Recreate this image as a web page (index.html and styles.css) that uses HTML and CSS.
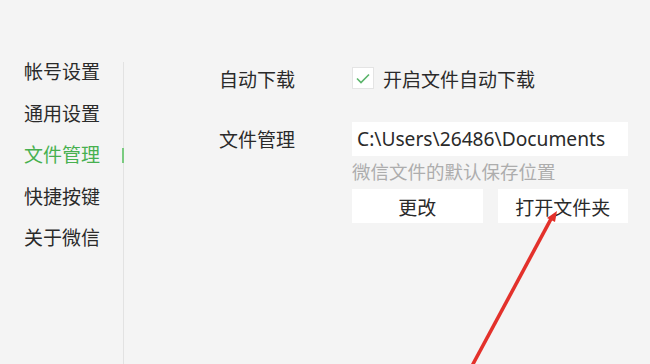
FILE: index.html
```html
<!DOCTYPE html>
<html lang="zh-CN">
<head>
<meta charset="utf-8">
<link rel="stylesheet" href="styles.css">
</head>
<body>
<div class="window">
  <nav class="sidebar">
    <ul class="menu">
      <li class="item">帐号设置</li>
      <li class="item">通用设置</li>
      <li class="item active">文件管理</li>
      <li class="item">快捷按键</li>
      <li class="item">关于微信</li>
    </ul>
  </nav>
  <main class="content">
    <div class="row row-download">
      <div class="label">自动下载</div>
      <label class="check">
        <span class="box"><svg width="14" height="11" viewBox="0 0 14 11"><path d="M1 5.5 L5 9.5 L13 1.5" fill="none" stroke="#5ab46a" stroke-width="1.6"/></svg></span>
        <span class="check-text">开启文件自动下载</span>
      </label>
    </div>
    <div class="row row-files">
      <div class="label label-files">文件管理</div>
      <div class="controls">
        <div class="path">C:\Users\26486\Documents</div>
        <div class="hint">微信文件的默认保存位置</div>
        <div class="buttons">
          <button class="btn">更改</button>
          <button class="btn">打开文件夹</button>
        </div>
      </div>
    </div>
  </main>
  <svg class="arrow" width="650" height="364" viewBox="0 0 650 364">
    <polygon points="471,364 475,364 553,219 550,217" fill="#e3312b"/>
    <polygon points="557,211 547,218 555,222" fill="#e3312b"/>
  </svg>
</div>
</body>
</html>
```
FILE: styles.css
```css
* { box-sizing: border-box; }
html, body { margin: 0; padding: 0; }
body {
  width: 650px;
  height: 364px;
  overflow: hidden;
  background: #f4f4f4;
  font-family: "Noto Sans CJK SC", "Noto Sans", sans-serif;
  color: #2a2a2a;
}
.window {
  position: relative;
  display: flex;
  height: 364px;
}
.sidebar {
  width: 124px;
  margin-top: 62px;
  border-right: 1px solid #e2e2e2;
  flex-shrink: 0;
}
.menu {
  list-style: none;
  margin: -12px 0 0 0;
  padding: 0 0 0 24px;
}
.item {
  position: relative;
  height: 41.5px;
  line-height: 41.5px;
  font-size: 19px;
}
.item.active { color: #47b04f; }
.item.active::after {
  content: "";
  position: absolute;
  right: -1px;
  top: 15px;
  width: 2px;
  height: 15px;
  background: #7acb80;
}
.content {
  flex: 1;
  padding: 67px 0 0 95px;
  font-size: 19px;
}
.row { display: flex; }
.label { width: 133px; flex-shrink: 0; }
.row-download { height: 22px; align-items: center; }
.check { display: flex; align-items: center; }
.box {
  width: 22px;
  height: 22px;
  background: #fff;
  border: 1px solid #e4e4e4;
  display: flex;
  align-items: center;
  justify-content: center;
  margin-right: 9px;
}
.row-files { margin-top: 33px; }
.label-files { height: 34px; line-height: 34px; }
.controls { width: 276px; }
.path {
  height: 34px;
  background: #fff;
  font-family: "Noto Sans", sans-serif;
  font-size: 19.2px;
  line-height: 34px;
  padding-left: 5px;
  white-space: nowrap;
}
.hint {
  color: #adadad;
  height: 33px;
  line-height: 30px;
  font-size: 18.5px;
}
.buttons { display: flex; gap: 15px; }
.btn {
  width: 131px;
  height: 34px;
  border: none;
  background: #fff;
  font-family: "Noto Sans CJK SC", sans-serif;
  font-size: 19px;
  color: #2a2a2a;
  padding: 0;
}
.arrow {
  position: absolute;
  left: 0;
  top: 0;
  pointer-events: none;
}
```
